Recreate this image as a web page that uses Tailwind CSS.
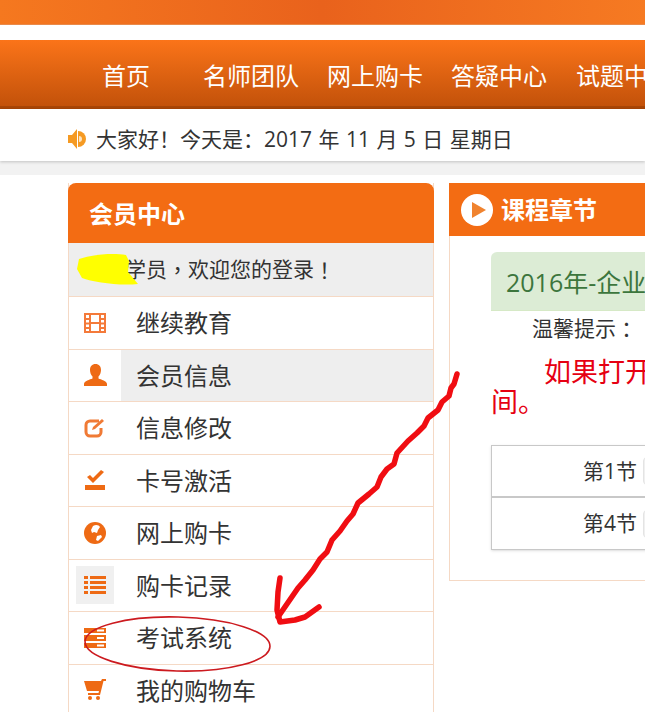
<!DOCTYPE html>
<html lang="zh-CN">
<head>
    <meta charset="UTF-8">
    <title>会员中心</title>
    <script src="https://cdn.jsdelivr.net/npm/@tailwindcss/browser@4"></script>
</head>
<body class="bg-white">
<div class="relative w-[645px] h-[712px] overflow-hidden bg-white text-[#333] font-['Open_Sans','Noto_Sans_CJK_SC',sans-serif]">
    <!-- Top strip -->
    <div class="h-[25px] bg-gradient-to-r from-[#f5781f] via-[#e9621c] to-[#f67a22] border-b border-[#e98a4a]"></div>
    <div class="h-[15px]"></div>

    <!-- Nav -->
    <nav class="h-[69px] pl-[102px] pt-[6px] flex items-center whitespace-nowrap text-[24px] leading-none text-white bg-gradient-to-b from-[#fb7419] to-[#c3520a] border-b-[3px] border-[#a84506]">
        <a class="mr-[53px]">首页</a>
        <a class="mr-[28px]">名师团队</a>
        <a class="mr-[28px]">网上购卡</a>
        <a class="mr-[29px]">答疑中心</a>
        <a>试题中心</a>
    </nav>

    <!-- Welcome bar -->
    <div class="h-[52px] pl-[68px] pt-[8px] flex items-center gap-[8px] whitespace-nowrap text-[21px] leading-none [word-spacing:1px] shadow-[0_1px_3px_rgba(0,0,0,0.2)] relative">
        <svg class="w-[20px] h-[22px] -mt-[1px]" viewBox="0 0 20 22">
            <path d="M0 7h4l5-6v20l-5-6H0z" fill="#f59a23"/>
            <path d="M10 3a8 8 0 0 1 0 16z" fill="#f59a23"/>
            <path d="M11 8a3 3 0 0 1 0 6z" fill="#fde3bd"/>
        </svg>
        <span>大家好<span class="font-['Noto_Sans_CJK_TC',sans-serif]">！</span>今天是<span class="font-['Noto_Sans_CJK_TC',sans-serif]">：</span>2017 年 11 月 5 日 星期日</span>
    </div>
    <div class="h-[14px] bg-[#f2f2f2]"></div>

    <!-- Main -->
    <div class="flex items-start gap-[15px] pl-[68px] pt-[8px] w-[1000px]">
        <!-- Member menu -->
        <aside class="w-[366px] shrink-0 border-x border-[#f5d9c5]">
            <h2 class="h-[60px] -mx-px pl-[21px] pt-[1px] flex items-center rounded-t-lg bg-[#f36c13] text-white text-[24px] font-bold leading-none">会员中心</h2>
            <div class="h-[54px] pl-[56px] flex items-center bg-[#eeeeee] border-b border-[#f5d9c5] text-[21px] leading-none whitespace-nowrap">学员<span class="font-['Noto_Sans_CJK_TC',sans-serif]">，</span>欢迎您的登录<span class="font-['Noto_Sans_CJK_TC',sans-serif]">！</span></div>
            <ul class="text-[24px] leading-none">
                <li class="h-[52.5px] flex items-stretch border-b border-[#f5d9c5]">
                    <span class="w-[52px] shrink-0 flex items-center justify-center">
                        <svg class="w-[22px] h-[20px]" viewBox="0 0 22 20" fill="#f47a3a"><path fill-rule="evenodd" d="M0 0h22v20H0zM2 2v3h3V2zm0 5v2.500h3V7zm0 4.500V14h3v-2.500zM2 16v2h3v-2zM17 2v3h3V2zm0 5v2.500h3V7zm0 4.500V14h3v-2.500zM17 16v2h3v-2zM7 2v7h8V2zm0 9v7h8v-7z"/></svg>
                    </span>
                    <span class="flex-1 pl-[15px] pt-[1px] flex items-center">继续教育</span>
                </li>
                <li class="h-[52.5px] flex items-stretch border-b border-[#f5d9c5]">
                    <span class="w-[52px] shrink-0 flex items-center justify-center">
                        <svg class="w-[23px] h-[22px]" viewBox="0 0 23 22" fill="#ee6a14"><path d="M11.500 0c3.500 0 5.500 2.500 5.500 6 0 2.500-1 5-2.500 6.500v2c2.500 1 8.500 2.500 8.500 5.500v2H0v-2c0-3 6-4.500 8.500-5.500v-2C7 11 6 8.500 6 6c0-3.500 2-6 5.500-6z"/></svg>
                    </span>
                    <span class="flex-1 pl-[15px] pt-[1px] flex items-center bg-[#eeeeee]">会员信息</span>
                </li>
                <li class="h-[52.5px] flex items-stretch border-b border-[#f5d9c5]">
                    <span class="w-[52px] shrink-0 flex items-center justify-center">
                        <svg class="w-[22px] h-[20px]" viewBox="0 0 22 20" fill="none" stroke="#f07a35" stroke-width="3"><path d="M15 3H6a4 4 0 0 0-4 4v7a4 4 0 0 0 4 4h7a4 4 0 0 0 4-4v-4"/><path d="M8 12l1-3 9-8 2 2-9 8z" fill="#f07a35" stroke="none"/></svg>
                    </span>
                    <span class="flex-1 pl-[15px] pt-[1px] flex items-center">信息修改</span>
                </li>
                <li class="h-[52.5px] flex items-stretch border-b border-[#f5d9c5]">
                    <span class="w-[52px] shrink-0 flex items-center justify-center">
                        <svg class="w-[20px] h-[20px]" viewBox="0 0 20 20" fill="#ee6a14"><path d="M0 15h20v5H0z"/><path d="M2 7l3-2 3 3 8-8 3 2-11 11z"/></svg>
                    </span>
                    <span class="flex-1 pl-[15px] pt-[1px] flex items-center">卡号激活</span>
                </li>
                <li class="h-[52.5px] flex items-stretch border-b border-[#f5d9c5]">
                    <span class="w-[52px] shrink-0 flex items-center justify-center">
                        <svg class="w-[22px] h-[22px]" viewBox="0 0 22 22"><circle cx="11" cy="11" r="11" fill="#ee6a14"/><path d="M9 4c3-2 6-1 7 1l-2 3-1 3-3-1-2 1-1-3zM13 14l4-1 1 2-4 4-2-1z" fill="#fff"/></svg>
                    </span>
                    <span class="flex-1 pl-[15px] pt-[1px] flex items-center">网上购卡</span>
                </li>
                <li class="h-[52.5px] flex items-stretch border-b border-[#f5d9c5]">
                    <span class="w-[52px] shrink-0 flex items-center pl-[7px]">
                        <span class="w-[38px] h-[38px] bg-[#f0f0f0] flex items-center justify-center">
                            <svg class="w-[22px] h-[20px]" viewBox="0 0 22 20" fill="#ee6a14"><path d="M0 1h4v3H0zM6 1h16v3H6zM0 6h4v3H0zM6 6h16v3H6zM0 11h4v3H0zM6 11h16v3H6zM0 16h4v3H0zM6 16h16v3H6z"/></svg>
                        </span>
                    </span>
                    <span class="flex-1 pl-[15px] pt-[1px] flex items-center">购卡记录</span>
                </li>
                <li class="h-[52.5px] flex items-stretch border-b border-[#f5d9c5]">
                    <span class="w-[52px] shrink-0 flex items-center justify-center">
                        <svg class="w-[22px] h-[20px]" viewBox="0 0 22 20" fill="#ee6a14"><path fill-rule="evenodd" d="M0 0h22v5H0zM0 7h22v6H0zM0 15h22v5H0zM13 9v2h7V9zM13 16.500v2h7v-2zM13 1.500v2h7v-2z"/></svg>
                    </span>
                    <span class="flex-1 pl-[15px] pt-[1px] flex items-center">考试系统</span>
                </li>
                <li class="h-[52.5px] flex items-stretch border-b border-[#f5d9c5]">
                    <span class="w-[52px] shrink-0 flex items-center justify-center">
                        <svg class="w-[22px] h-[22px]" viewBox="0 0 22 22" fill="#ee6a14"><path d="M0 2h17l1-2h4v2h-2.500L16 16H4v-2h10.500l.5-2H3z"/><circle cx="6" cy="19" r="2"/><circle cx="14" cy="19" r="2"/></svg>
                    </span>
                    <span class="flex-1 pl-[15px] pt-[1px] flex items-center">我的购物车</span>
                </li>
            </ul>
        </aside>

        <!-- Course panel -->
        <section class="w-[500px] shrink-0 border-x border-b border-[#f5d9c5] h-[398px]">
            <h2 class="h-[53px] -mx-px pl-[12px] flex items-center gap-[8px] bg-[#f36c13] text-white text-[24px] font-bold leading-none">
                <svg class="w-[32px] h-[32px]" viewBox="0 0 32 32"><circle cx="16" cy="16" r="16" fill="#fff"/><path d="M11 8l14 8-14 8z" fill="#f0832f"/></svg>
                课程章节
            </h2>
            <div class="pl-[41px] pt-[16px]">
                <div class="h-[59px] pl-[15px] pt-[2px] flex items-center rounded-t-md bg-[#dcecd5] border-b border-[#d6e9c6] text-[#3c763d] text-[25px] leading-none whitespace-nowrap">2016年-企业会计继续教育</div>
                <p class="h-[34px] pl-[41px] flex items-center text-[21px] leading-none whitespace-nowrap">温馨提示<span class="font-['Noto_Sans_CJK_TC',sans-serif]">：</span></p>
                <p class="text-[#e60012] text-[27px] leading-[30px] mt-[12px] whitespace-nowrap"><span class="pl-[53px]">如果打开</span><br>间。</p>
                <div class="mt-[28px] w-[459px] border border-[#c8c8c8] shadow-sm">
                    <div class="h-[52px] flex items-center gap-[6px] border-b-2 border-[#c8c8c8] pl-[91px] text-[21px] leading-none">第1节<span class="w-[40px] h-[28px] rounded bg-[#f0f0f0] border border-[#e4e4e4]"></span></div>
                    <div class="h-[51px] flex items-center gap-[6px] pl-[91px] text-[21px] leading-none">第4节<span class="w-[40px] h-[28px] rounded bg-[#f0f0f0] border border-[#e4e4e4]"></span></div>
                </div>
            </div>
        </section>
    </div>

    <!-- Hand-drawn annotations on the screenshot -->
    <svg class="absolute inset-0 pointer-events-none" width="645" height="712" viewBox="0 0 645 712" fill="none">
        <path d="M79 259c15-5 35-6 47-4l3 6-1 11 10 12c-20 2-45-2-56-6l-5-9z" fill="#ffff00"/>
        <path d="M457 374L454 384L451 388L449 396L442 402L438 410L428 418L424 426L417 433L408 441L397 453L394 464L387 469L381 477L377 487L369 494L358 503L353 514L347 521L340 531L332 540L327 552L320 559L313 570L305 580L298 588L278 617" stroke="#f00d12" stroke-width="5.500" stroke-linecap="round" stroke-linejoin="round"/>
        <path d="M280 578L278 592L277 610L280 622L295 620L305 617L319 607" stroke="#f00d12" stroke-width="5.500" stroke-linecap="round" stroke-linejoin="round"/>
        <ellipse cx="177.500" cy="644" rx="92.500" ry="27" transform="rotate(1.500 177 644)" stroke="#cc1a1f" stroke-width="1.600"/>
    </svg>
</div>
</body>
</html>
